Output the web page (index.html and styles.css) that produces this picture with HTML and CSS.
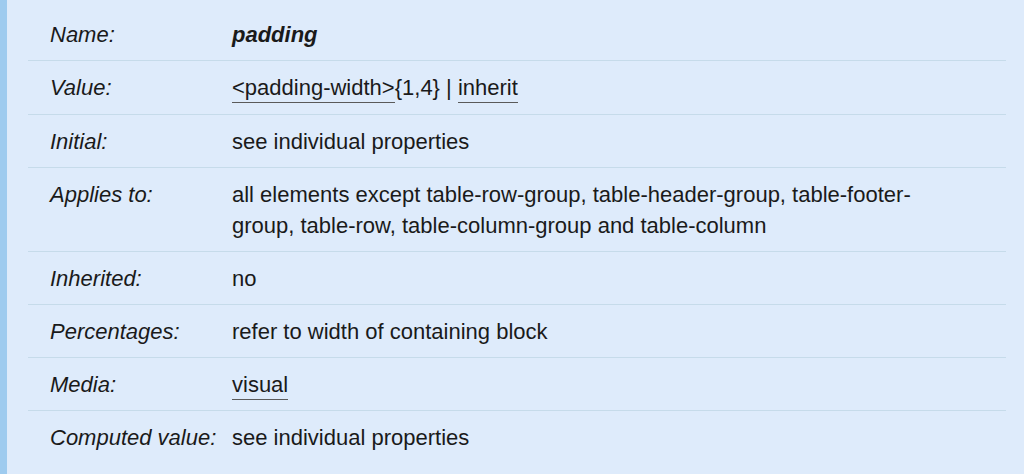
FILE: index.html
```html
<!DOCTYPE html>
<html lang="en">
<head>
<meta charset="utf-8">
<title>padding</title>
<link rel="stylesheet" href="styles.css">
</head>
<body>
<div class="page">
  <div class="bar"></div>
  <main class="content">
    <div class="def">
      <div class="row"><div class="label">Name:</div><div class="value"><strong class="prop">padding</strong></div></div>
      <div class="row row-links"><div class="label">Value:</div><div class="value"><span class="ref">&lt;padding-width&gt;</span>{1,4} | <span class="ref">inherit</span></div></div>
      <div class="row"><div class="label">Initial:</div><div class="value">see individual properties</div></div>
      <div class="row"><div class="label">Applies to:</div><div class="value">all elements except table-row-group, table-header-group, table-footer-group, table-row, table-column-group and table-column</div></div>
      <div class="row"><div class="label">Inherited:</div><div class="value">no</div></div>
      <div class="row"><div class="label">Percentages:</div><div class="value">refer to width of containing block</div></div>
      <div class="row"><div class="label">Media:</div><div class="value"><span class="ref">visual</span></div></div>
      <div class="row"><div class="label">Computed value:</div><div class="value">see individual properties</div></div>
    </div>
  </main>
</div>
</body>
</html>
```

FILE: styles.css
```css
html, body {
  margin: 0;
  padding: 0;
  height: 100%;
  background: #deebfb;
}
body {
  font-family: "Liberation Sans", Arial, sans-serif;
  font-size: 22px;
  color: #1a1a1a;
}
.page {
  display: flex;
  min-height: 100%;
}
.bar {
  width: 7px;
  flex: none;
  background: #9ecbef;
}
.content {
  flex: 1;
  padding: 8px 18px 0 21px;
}
.def {
  width: 978px;
}
.row {
  display: grid;
  grid-template-columns: 204px 1fr;
  border-bottom: 1px solid #c6dbea;
}
.row:last-child {
  border-bottom: none;
}
.label, .value {
  padding: 11px 0 10px;
  line-height: 31px;
}
.row-links .label, .row-links .value {
  padding-bottom: 11px;
}
.label {
  padding-left: 22px;
  font-style: italic;
}
.value {
  padding-right: 56px;
}
.prop {
  font-style: italic;
  font-weight: bold;
}
.ref {
  border-bottom: 1px solid #5a5a5a;
  padding-bottom: 2px;
}
```
